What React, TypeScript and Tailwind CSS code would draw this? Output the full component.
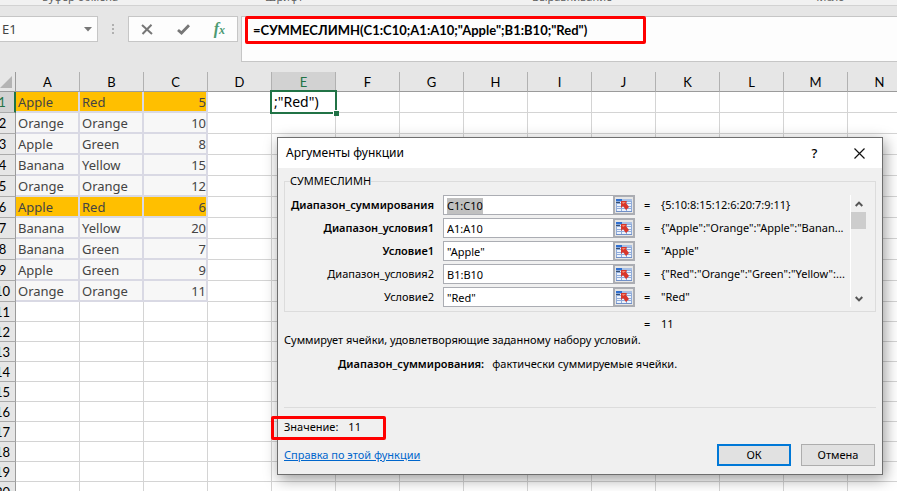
import { useEffect, useRef } from "react";

const columns = ["A", "B", "C", "D", "E", "F", "G", "H", "I", "J", "K", "L", "M", "N"];

const data: [string, string, number][] = [
  ["Apple", "Red", 5],
  ["Orange", "Orange", 10],
  ["Apple", "Green", 8],
  ["Banana", "Yellow", 15],
  ["Orange", "Orange", 12],
  ["Apple", "Red", 6],
  ["Banana", "Yellow", 20],
  ["Banana", "Green", 7],
  ["Apple", "Green", 9],
  ["Orange", "Orange", 11],
];

const args = [
  { id: "sum", label: "Диапазон_суммирования", value: "C1:C10", result: "{5:10:8:15:12:6:20:7:9:11}", required: true },
  { id: "range1", label: "Диапазон_условия1", value: "A1:A10", result: '{"Apple":"Orange":"Apple":"Banan...', required: true },
  { id: "cond1", label: "Условие1", value: '"Apple"', result: '"Apple"', required: true },
  { id: "range2", label: "Диапазон_условия2", value: "B1:B10", result: '{"Red":"Orange":"Green":"Yellow":...', required: false },
  { id: "cond2", label: "Условие2", value: '"Red"', result: '"Red"', required: false },
];

function RangeIcon() {
  return (
    <svg width="16" height="13" viewBox="0 0 16 13" shapeRendering="crispEdges">
      <rect width="16" height="13" fill="#8fabda" />
      <rect width="6" height="2" fill="#2f6fd0" />
      <rect x="6" width="10" height="2" fill="#a9c0e4" />
      <path d="M1 3h4v1H1zM6 3h4v1H6zM11 3h4v1h-4zM1 5h4v2H1zM6 5h4v2H6zM11 5h4v2h-4zM1 8h4v1H1zM6 8h4v1H6zM11 8h4v1h-4zM1 10h4v2H1zM6 10h4v2H6zM11 10h4v2h-4z" fill="#edf3fc" />
      <path d="M0 12h16v1H0z" fill="#6f8fc8" />
      <path d="M0 3h4v1H0z" fill="#37506f" />
      <path d="M5 2h6l-1 2 3 4-3 3-3-4-2 2z" fill="#d9362a" shapeRendering="auto" />
      <path d="M6 3h4L7 5z" fill="#f58a70" shapeRendering="auto" />
    </svg>
  );
}

function TopBar() {
  return (
    <header>
      <div className="flex h-[5px] items-end overflow-hidden bg-[#f1f1f1] pl-[42px] text-[11px] leading-4 text-[#5f5f5f]">
        <span className="w-[223px] shrink-0">Буфер обмена</span>
        <span className="w-[267px] shrink-0">Шрифт</span>
        <span className="w-[280px] shrink-0">Выравнивание</span>
        <span className="shrink-0">Число</span>
      </div>
      <div className="flex h-[67px] items-start border-t border-[#d2d2d2] pt-2.5">
        <div className="flex h-[26px] w-[98px] items-center border border-l-0 border-[#c6c6c6] bg-[#fdfdfd] pl-0.5">
          <input aria-label="Имя" defaultValue="E1" className="h-6 w-[78px] text-[13px] text-[#444] outline-none" />
          <button aria-label="Список имён" className="flex h-5 w-4 items-center justify-center">
            <svg width="8" height="5" viewBox="0 0 8 5" fill="#777"><path d="M0 0h8L4 4.5z" /></svg>
          </button>
        </div>
        <div className="flex h-[26px] w-[30px] flex-col items-center justify-center gap-0.5">
          <i className="size-0.5 bg-[#b0b0b0]" />
          <i className="size-0.5 bg-[#b0b0b0]" />
          <i className="size-0.5 bg-[#b0b0b0]" />
        </div>
        <div className="flex h-[26px] w-[110px] items-center justify-around border border-[#c6c6c6] bg-[#fdfdfd]">
          <button aria-label="Отмена ввода">
            <svg width="12" height="11" viewBox="0 0 12 11" fill="none" stroke="#777" strokeWidth="2"><path d="M1 1l10 9M10.500 .8L1.500 10" /></svg>
          </button>
          <button aria-label="Ввод">
            <svg width="13" height="11" viewBox="0 0 13 11" fill="none" stroke="#777" strokeWidth="2.8"><path d="M1 6l3.500 3L12 1.200" /></svg>
          </button>
          <button aria-label="Вставить функцию" className="font-['Liberation_Serif',serif] text-base leading-4 font-bold text-[#4c9a72] italic">
            f<span className="text-xs">x</span>
          </button>
        </div>
        <div className="relative ml-[3px] h-[46px] flex-1 border border-r-0 border-[#c6c6c6] bg-[#fdfdfd]">
          <input
            aria-label="Строка формул"
            defaultValue={'=СУММЕСЛИМН(C1:C10;A1:A10;"Apple";B1:B10;"Red")'}
            className="h-[26px] w-full pl-[11px] font-['Lato','Noto_Sans',sans-serif] text-[13px] font-bold text-black outline-none"
          />
          <div className="pointer-events-none absolute -top-px left-[3px] h-7 w-[401px] rounded-xs border-3 border-[#ff0000]" />
        </div>
      </div>
    </header>
  );
}

function Sheet() {
  return (
    <table className="-ml-2.5 w-[922px] table-fixed border-separate border-spacing-0 bg-white text-[13px] leading-4">
      <colgroup>
        <col className="w-[26px]" />
        {columns.map((c) => (
          <col key={c} className="w-16" />
        ))}
      </colgroup>
      <thead>
        <tr className="h-5 bg-[#e6e6e6] font-['Lato','Noto_Sans',sans-serif] text-black">
          <td className="border-r border-b border-[#9b9b9b] p-0">
            <svg className="mr-[3px] ml-auto" width="12" height="12" viewBox="0 0 12 12" fill="#b4b4b4"><path d="M12 0v12H0z" /></svg>
          </td>
          {columns.map((c) => (
            <th
              key={c}
              scope="col"
              className={`border-r border-b border-r-[#b1b1b1] border-b-[#9b9b9b] p-0 font-normal ${c === "E" ? "bg-[#d2d2d2] text-[#217346]" : ""}`}
            >
              {c}
            </th>
          ))}
        </tr>
      </thead>
      <tbody>
        {Array.from({ length: 20 }, (_, r) => {
          const row = data[r];
          const hot = r === 0 || r === 5;
          return (
            <tr key={r} className={row ? "h-[21px]" : "h-5"}>
              <th
                scope="row"
                className={`p-0 font-['Lato','Noto_Sans',sans-serif] font-normal ${
                  r === 0
                    ? "border-r-2 border-b border-r-[#217346] border-b-[#ababab] bg-[#d2d2d2] text-[#217346]"
                    : "border-r border-b border-r-[#9b9b9b] border-b-[#ababab] bg-[#e6e6e6] text-black"
                }`}
              >
                {r + 1}
              </th>
              {columns.map((c, i) => {
                if (row && i < 3) {
                  return (
                    <td
                      key={c}
                      className={`border-r-2 border-b-2 border-[#d9d9e4] text-[#444] ${hot ? "bg-[#ffbf00]" : "bg-[#f7f7f7]"} ${
                        i === 2 ? "py-0 pr-0 pl-0 text-right" : "py-0 pr-0 pl-0.5"
                      }`}
                    >
                      {row[i]}
                    </td>
                  );
                }
                if (r === 0 && c === "E") {
                  return (
                    <td key={c} className="relative border-r border-b border-[#d4d4d4] p-0">
                      <div className="absolute -top-0.5 -right-0.5 -bottom-0.5 -left-0.5 border-2 border-[#217346] bg-white pl-0.5 text-[14px] leading-5 text-black">
                        ;"Red")
                        <i className="absolute -right-1 -bottom-1 size-[6px] border-t border-l border-white bg-[#217346]" />
                      </div>
                    </td>
                  );
                }
                return <td key={c} className="border-r border-b border-[#d4d4d4] p-0" />;
              })}
            </tr>
          );
        })}
      </tbody>
    </table>
  );
}

function ArgumentsDialog() {
  const first = useRef<HTMLInputElement>(null);
  useEffect(() => {
    first.current?.focus();
    first.current?.select();
  }, []);

  return (
    <section
      role="dialog"
      aria-labelledby="dialog-title"
      className="absolute top-[137px] left-[277px] w-[606px] border border-[#6e6e6e] bg-[#f0f0f0] text-[11px] leading-4 text-black shadow-[2px_4px_14px_rgba(0,0,0,0.4)]"
    >
      <div className="flex h-[30px] items-center bg-white pl-2">
        <h1 id="dialog-title" className="flex-1 text-xs">Аргументы функции</h1>
        <button aria-label="Справка" className="w-[45px] text-[13px] font-medium">?</button>
        <button aria-label="Закрыть" className="flex w-[45px] justify-center">
          <svg width="11" height="11" viewBox="0 0 11 11" stroke="#111" strokeWidth="1.200"><path d="M.5.5l10 10M10.500.5l-10 10" /></svg>
        </button>
      </div>

      <div className="px-1.5 pt-[5px] pb-2">
        <fieldset className="min-w-0 border border-[#dcdcdc] pb-1">
          <legend className="ml-[5px]">СУММЕСЛИМН</legend>
          <div className="flex justify-between pt-1.5 pr-[9px]">
            <div className="flex flex-col gap-[3px]">
              {args.map((a, i) => (
                <div key={a.id} className="flex h-5 items-center">
                  <label htmlFor={a.id} className={`w-[149px] text-right ${a.required ? "font-semibold" : ""}`}>
                    {a.label}
                  </label>
                  <div className="ml-[9px] flex h-5 w-[192px] border border-[#abadb3] bg-white">
                    <input
                      id={a.id}
                      ref={i === 0 ? first : undefined}
                      defaultValue={a.value}
                      className="min-w-0 flex-1 pt-px pl-[3px] outline-none selection:bg-[#c0c0c0] selection:text-black"
                    />
                    <button aria-label={`Выбрать: ${a.label}`} className="-my-px -mr-px flex w-[22px] items-center justify-center border-2 border-[#abadb3] bg-[#e6e6e6]">
                      <RangeIcon />
                    </button>
                  </div>
                  <span className="ml-[9px] w-[17px]">=</span>
                  <output htmlFor={a.id} className="whitespace-nowrap">{a.result}</output>
                </div>
              ))}
            </div>
            <div className="flex w-4 flex-col items-center border-l border-white">
              <button aria-label="Вверх" className="flex h-[17px] w-full items-center justify-center">
                <svg width="8" height="6" viewBox="0 0 8 6" fill="none" stroke="#555" strokeWidth="2"><path d="M.7 5L4 1.600 7.300 5" /></svg>
              </button>
              <div className="h-[17px] w-full bg-[#cdcdcd]" />
              <button aria-label="Вниз" className="mt-auto flex h-[17px] w-full items-center justify-center">
                <svg width="8" height="6" viewBox="0 0 8 6" fill="none" stroke="#555" strokeWidth="2"><path d="M.7 1L4 4.400 7.300 1" /></svg>
              </button>
            </div>
          </div>
        </fieldset>

        <div className="mt-1 flex pl-[360px]">
          <span className="w-[17px]">=</span>
          <output>11</output>
        </div>
        <p>Суммирует ячейки, удовлетворяющие заданному набору условий.</p>
        <p className="mt-2 flex gap-2 pl-[54px]">
          <b className="font-semibold">Диапазон_суммирования:</b>
          <span>фактически суммируемые ячейки.</span>
        </p>
        <hr className="mt-[35px] border-[#dcdcdc]" />
        <p className="mt-[11px] flex gap-2.5">
          <span>Значение:</span>
          <output>11</output>
        </p>
        <div className="mt-[9px] flex items-center">
          <a href="#help" className="flex-1 text-[#0066cc] underline">Справка по этой функции</a>
          <div className="flex gap-2.5 pr-px">
            <button className="h-[22px] w-[74px] border-2 border-[#0078d7] bg-[#e1e1e1]">ОК</button>
            <button className="h-[22px] w-[74px] border border-[#adadad] bg-[#e1e1e1]">Отмена</button>
          </div>
        </div>
      </div>
    </section>
  );
}

export default function App() {
  return (
    <main className="relative h-screen overflow-hidden bg-[#e6e6e6] font-['Noto_Sans','Open_Sans',sans-serif]">
      <TopBar />
      <Sheet />
      <ArgumentsDialog />
      <div className="pointer-events-none absolute top-[416px] left-[271px] h-6 w-[115px] rounded-xs border-3 border-[#ff0000]" />
    </main>
  );
}
